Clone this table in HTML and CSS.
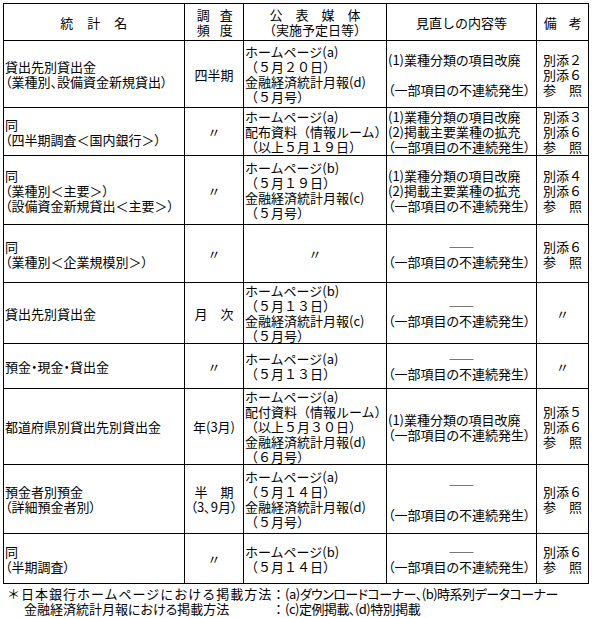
FILE: index.html
```html
<!DOCTYPE html>
<html lang="ja">
<head>
<meta charset="utf-8">
<title>統計の見直し</title>
<link rel="stylesheet" href="styles.css">
</head>
<body>
<table class="tbl">
  <colgroup>
    <col class="w1"><col class="w2"><col class="w3"><col class="w4"><col class="w5">
  </colgroup>
  <tr class="r0">
    <th class="h1">統　計　名</th>
    <th class="h2">調　査<br>頻　度</th>
    <th class="h3">公　表　媒　体<br>（実施予定日等）</th>
    <th class="h4">見直しの内容等</th>
    <th class="h5">備　考</th>
  </tr>
  <tr class="r1">
    <td class="c1">貸出先別貸出金<br>（業種別、設備資金新規貸出）</td>
    <td class="c2">四半期</td>
    <td class="c3">ホームページ(a)<br>（５月２０日）<br>金融経済統計月報(d)<br>（５月号）</td>
    <td class="c4">(1)業種分類の項目改廃<br><br>（一部項目の不連続発生）</td>
    <td class="c5">別添２<br>別添６<br>参　照</td>
  </tr>
  <tr class="r2">
    <td class="c1">同<br>（四半期調査＜国内銀行＞）</td>
    <td class="c2">〃</td>
    <td class="c3">ホームページ(a)<br>配布資料（情報ルーム）<br>（以上５月１９日）</td>
    <td class="c4">(1)業種分類の項目改廃<br>(2)掲載主要業種の拡充<br>（一部項目の不連続発生）</td>
    <td class="c5">別添３<br>別添６<br>参　照</td>
  </tr>
  <tr class="r3">
    <td class="c1">同<br>（業種別＜主要＞）<br>（設備資金新規貸出＜主要＞）</td>
    <td class="c2">〃</td>
    <td class="c3">ホームページ(b)<br>（５月１９日）<br>金融経済統計月報(c)<br>（５月号）</td>
    <td class="c4">(1)業種分類の項目改廃<br>(2)掲載主要業種の拡充<br>（一部項目の不連続発生）</td>
    <td class="c5">別添４<br>別添６<br>参　照</td>
  </tr>
  <tr class="r4">
    <td class="c1">同<br>（業種別＜企業規模別＞）</td>
    <td class="c2">〃</td>
    <td class="c3 mid">〃</td>
    <td class="c4"><div class="dash">――</div>（一部項目の不連続発生）</td>
    <td class="c5">別添６<br>参　照</td>
  </tr>
  <tr class="r5">
    <td class="c1">貸出先別貸出金</td>
    <td class="c2">月　次</td>
    <td class="c3">ホームページ(b)<br>（５月１３日）<br>金融経済統計月報(c)<br>（５月号）</td>
    <td class="c4"><div class="dash">――</div>（一部項目の不連続発生）</td>
    <td class="c5">〃</td>
  </tr>
  <tr class="r6">
    <td class="c1">預金・現金・貸出金</td>
    <td class="c2">〃</td>
    <td class="c3">ホームページ(a)<br>（５月１３日）</td>
    <td class="c4"><div class="dash">――</div>（一部項目の不連続発生）</td>
    <td class="c5">〃</td>
  </tr>
  <tr class="r7">
    <td class="c1">都道府県別貸出先別貸出金</td>
    <td class="c2">年(3月)</td>
    <td class="c3">ホームページ(a)<br>配付資料（情報ルーム）<br>（以上５月３０日）<br>金融経済統計月報(d)<br>（６月号）</td>
    <td class="c4">(1)業種分類の項目改廃<br>（一部項目の不連続発生）</td>
    <td class="c5">別添５<br>別添６<br>参　照</td>
  </tr>
  <tr class="r8">
    <td class="c1">預金者別預金<br>（詳細預金者別）</td>
    <td class="c2">半　期<br>（3､9月）</td>
    <td class="c3">ホームページ(a)<br>（５月１４日）<br>金融経済統計月報(d)<br>（５月号）</td>
    <td class="c4"><div class="dash">――</div><br>（一部項目の不連続発生）</td>
    <td class="c5">別添６<br>参　照</td>
  </tr>
  <tr class="r9">
    <td class="c1">同<br>（半期調査）</td>
    <td class="c2">〃</td>
    <td class="c3">ホームページ(b)<br>（５月１４日）</td>
    <td class="c4"><div class="dash">――</div>（一部項目の不連続発生）</td>
    <td class="c5">別添６<br>参　照</td>
  </tr>
</table>
<div class="notes">
  <div class="note">
    <span class="nl l1">＊日本銀行ホームページにおける掲載方法</span><span class="colon">：</span><span class="nv">(a)ダウンロードコーナー、(b)時系列データコーナー</span>
  </div>
  <div class="note">
    <span class="nl l2">金融経済統計月報における掲載方法</span><span class="colon">：</span><span class="nv">(c)定例掲載、(d)特別掲載</span>
  </div>
</div>
</body>
</html>
```

FILE: styles.css
```css
html, body {
  background: #fff;
}
body {
  margin: 0;
  padding: 3px 0 0 3px;
  font-family: "Noto Sans CJK JP", "Noto Sans", sans-serif;
  font-size: 13px;
  line-height: 15px;
  color: #000;
}
.tbl {
  border-collapse: collapse;
  table-layout: fixed;
  width: 586px;
}
.w1 { width: 181px; }
.w2 { width: 59px; }
.w3 { width: 143px; }
.w4 { width: 150px; }
.w5 { width: 52px; }

.tbl th,
.tbl td {
  border: 1px solid #000;
  padding: 0 1px;
  vertical-align: middle;
  white-space: nowrap;
  font-weight: normal;
  overflow: visible;
}
.tbl th { text-align: center; }
.h1 { padding-right: 10px; letter-spacing: 0.5px; }
.h2 { letter-spacing: -1.5px; }
.h3 { letter-spacing: 0; }
.h5 { letter-spacing: -0.5px; }

.r0 { height: 37px; }
.r1 { height: 67px; }
.r2 { height: 48px; }
.r3 { height: 69px; }
.r4 { height: 58px; }
.r5 { height: 60px; }
.r6 { height: 45px; }
.r7 { height: 76px; }
.r8 { height: 69px; }
.r9 { height: 50px; }

.c1 { text-align: left; font-feature-settings: "palt"; }
.c2 { text-align: center; font-feature-settings: "palt"; }
.c3 { text-align: left; padding-left: 2px; }
.c3.mid { text-align: center; }
.c4 { text-align: left; font-feature-settings: "palt"; }
.c5 { text-align: center; }
.dash { text-align: center; }

.notes {
  margin-top: 2px;
}
.note {
  display: flex;
  white-space: nowrap;
}
.nl {
  flex: none;
  width: 269px;
  box-sizing: border-box;
}
.l1 { padding-left: 4px; letter-spacing: 1px; }
.l2 { padding-left: 21px; font-feature-settings: "palt"; }
.colon { flex: none; width: 13px; }
.nv { font-feature-settings: "palt"; letter-spacing: -0.5px; }
```
